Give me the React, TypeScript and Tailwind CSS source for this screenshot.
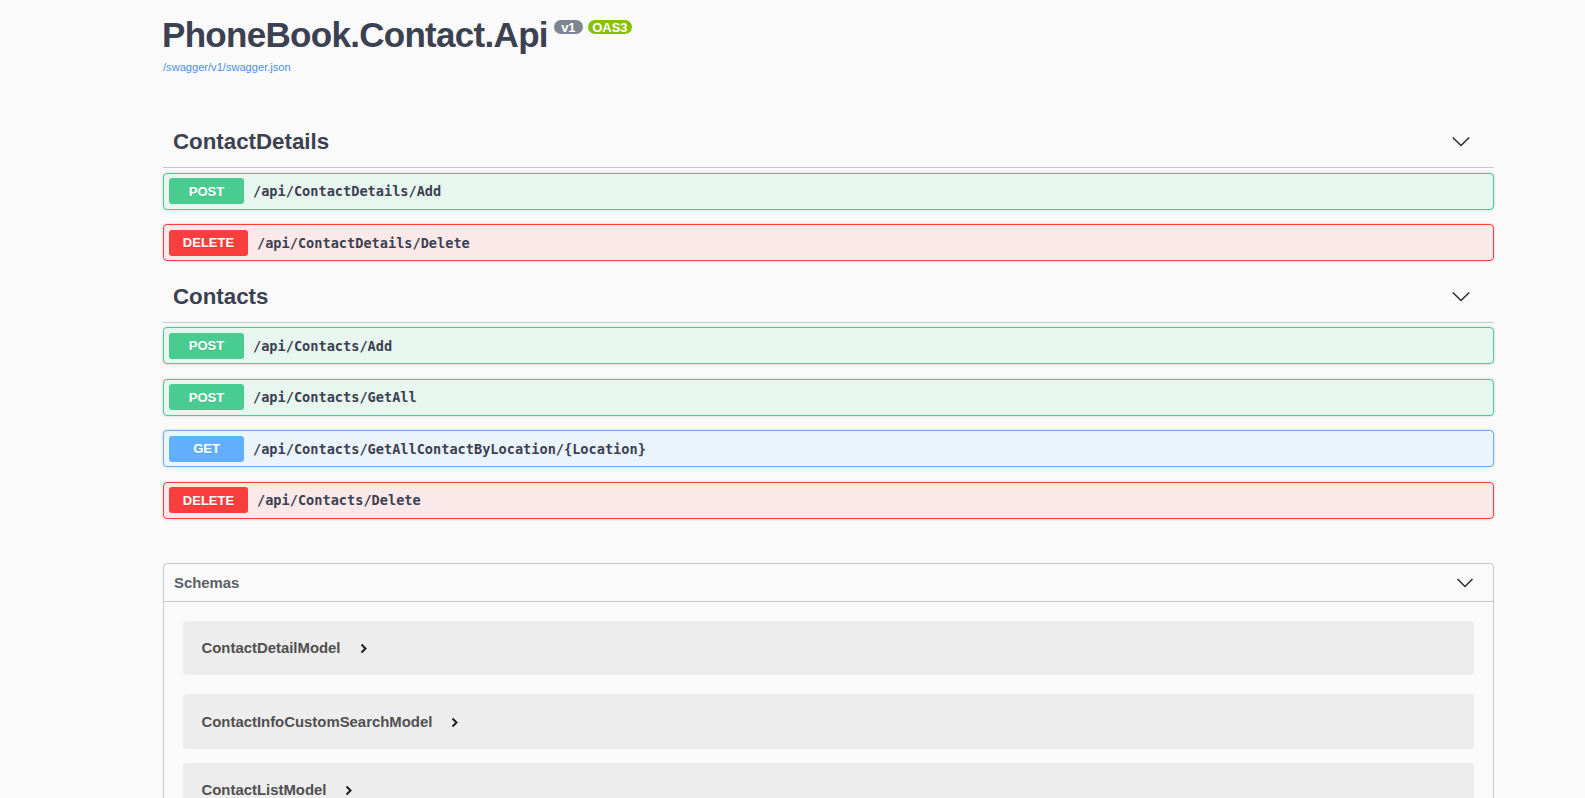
import React from "react";

type Method = "POST" | "DELETE" | "GET";

const methodStyles: Record<Method, { block: string; badge: string }> = {
  POST: { block: "bg-[#e8f6f0] border-[#49cc90]", badge: "bg-[#49cc90] w-[75px]" },
  DELETE: { block: "bg-[#fbe8e8] border-[#f93e3e]", badge: "bg-[#f93e3e] w-[79px]" },
  GET: { block: "bg-[#ebf3fb] border-[#61affe]", badge: "bg-[#61affe] w-[75px]" },
};

function Op({ method, path }: { method: Method; path: string }) {
  const s = methodStyles[method];
  return (
    <div
      className={`flex items-center h-[37px] mb-[14.5px] rounded-[4px] border px-[5px] shadow-[0_0_3px_rgba(0,0,0,0.19)] ${s.block}`}
    >
      <span
        className={`flex items-center justify-center h-[26px] rounded-[3px] text-white font-bold text-[13px] [text-shadow:0_1px_0_rgba(0,0,0,0.1)] ${s.badge}`}
      >
        {method}
      </span>
      <span className="pl-[9px] font-['DejaVu_Sans_Mono',monospace] font-bold text-[13.6px] text-[#3b4151]">
        {path}
      </span>
    </div>
  );
}

function DownChevron() {
  return (
    <svg width="20" height="20" viewBox="0 0 20 20" className="shrink-0">
      <polyline
        points="1.8,5.5 10,13.5 18.2,5.5"
        fill="none"
        stroke="#2b2b2b"
        strokeWidth="1.5"
      />
    </svg>
  );
}

function TagHeading({ name }: { name: string }) {
  return (
    <div className="flex items-center h-[47px] pb-[4px] border-b border-[#c6c8cd] pl-[10px] pr-[23.5px] mb-[4.5px]">
      <h3 className="flex-1 text-[22.3px] leading-[26px] font-bold text-[#3b4151]">{name}</h3>
      <DownChevron />
    </div>
  );
}

function Model({ name, h, mb }: { name: string; h: string; mb: string }) {
  return (
    <div className={`flex items-center rounded-[4px] bg-[#ededed] pl-[18.5px] ${h} ${mb}`}>
      <span className="text-[14.9px] font-bold text-[#505050]">{name}</span>
      <svg width="8" height="11" viewBox="0 0 8 11" className="ml-[19px] mt-[1px]">
        <polyline points="1.5,1.5 5.5,5.5 1.5,9.5" fill="none" stroke="#1f1f1f" strokeWidth="2" />
      </svg>
    </div>
  );
}

export default function App() {
  return (
    <div className="w-full h-[798px] overflow-hidden bg-[#fafafa] font-['Liberation_Sans',Arial,sans-serif]">
      <div className="ml-[163px] w-[1331px]">
        <div className="pt-[15px]">
          <div className="flex items-start">
            <h2 className="text-[35px] leading-[40px] font-bold tracking-[-0.7px] text-[#3b4151] -ml-[1px]">
              PhoneBook.Contact.Api
            </h2>
            <span className="ml-[6px] mt-[5px] h-[14px] w-[29px] rounded-full bg-[#7d8492] flex items-center justify-center text-white font-bold text-[13px] leading-none">
              v1
            </span>
            <span className="ml-[5px] mt-[5px] h-[14px] w-[44px] rounded-full bg-[#89bf04] flex items-center justify-center text-white font-bold text-[13px] leading-none">
              OAS3
            </span>
          </div>
          <a className="block mt-[6px] text-[11.1px] leading-[13px] text-[#4990e2]">
            /swagger/v1/swagger.json
          </a>
        </div>

        <div className="mt-[47.3px]">
          <TagHeading name="ContactDetails" />
          <Op method="POST" path="/api/ContactDetails/Add" />
          <Op method="DELETE" path="/api/ContactDetails/Delete" />
        </div>

        <div>
          <TagHeading name="Contacts" />
          <Op method="POST" path="/api/Contacts/Add" />
          <Op method="POST" path="/api/Contacts/GetAll" />
          <Op method="GET" path="/api/Contacts/GetAllContactByLocation/{Location}" />
          <Op method="DELETE" path="/api/Contacts/Delete" />
        </div>

        <div className="mt-[44.5px] border border-[#c6c8cd] rounded-[4px]">
          <div className="flex items-center h-[38px] border-b border-[#c6c8cd] pl-[10px] pr-[19px]">
            <h4 className="flex-1 text-[14.9px] font-bold text-[#5c5f66]">Schemas</h4>
            <svg width="18" height="18" viewBox="0 0 18 18" className="shrink-0">
              <polyline points="1.5,5 9,12.5 16.5,5" fill="none" stroke="#2b2b2b" strokeWidth="1.5" />
            </svg>
          </div>
          <div className="px-[19px] pt-[19px] pb-[20px]">
            <Model name="ContactDetailModel" h="h-[54px]" mb="mb-[19px]" />
            <Model name="ContactInfoCustomSearchModel" h="h-[55px]" mb="mb-[14px]" />
            <Model name="ContactListModel" h="h-[54px]" mb="mb-[14px]" />
            <Model name="ContactModel" h="h-[54px]" mb="mb-[14px]" />
          </div>
        </div>
      </div>
    </div>
  );
}
